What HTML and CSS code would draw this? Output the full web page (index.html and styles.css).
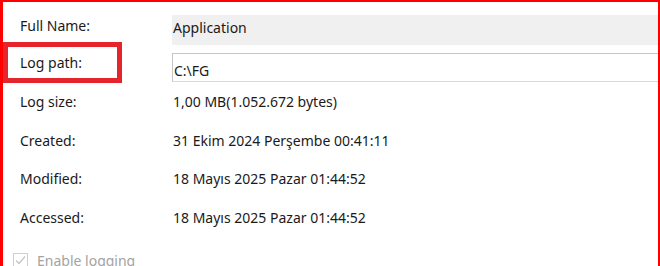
FILE: index.html
```html
<!DOCTYPE html>
<html lang="en">
<head>
    <meta charset="UTF-8">
    <meta name="viewport" content="width=device-width, initial-scale=1.0">
    <title>Log Properties</title>
    <link rel="stylesheet" href="styles.css">
</head>
<body>
    <div class="frame">
        <div class="row row-name">
            <div class="label">Full Name:</div>
            <div class="value field-readonly">Application</div>
        </div>
        <div class="row row-path">
            <div class="label label-marked">
                Log path:
                <span class="mark"></span>
            </div>
            <input type="text" class="value field-input" value="C:\FG">
        </div>
        <div class="row row-info">
            <div class="label">Log size:</div>
            <div class="value">1,00 MB(1.052.672 bytes)</div>
        </div>
        <div class="row row-info">
            <div class="label">Created:</div>
            <div class="value">31 Ekim 2024 Perşembe 00:41:11</div>
        </div>
        <div class="row row-info">
            <div class="label">Modified:</div>
            <div class="value">18 Mayıs 2025 Pazar 01:44:52</div>
        </div>
        <div class="row row-info">
            <div class="label">Accessed:</div>
            <div class="value">18 Mayıs 2025 Pazar 01:44:52</div>
        </div>
        <label class="check">
            <span class="box">
                <svg width="13" height="13" viewBox="0 0 13 13">
                    <path d="M2 6.5 L5 9.5 L11 2.5" fill="none" stroke="#c4c4c4" stroke-width="1.2"/>
                </svg>
            </span>
            Enable logging
        </label>
    </div>
</body>
</html>
```

FILE: styles.css
```css
body{
    margin: 0;
    font-family: "Noto Sans", "Open Sans", sans-serif;
    font-size: 14px;
    color: #1a1a1a;
    background: #fff;
}

.frame{
    width: 655px;
    height: 262px;
    border-style: solid;
    border-color: #ff0000;
    border-width: 2px 2px 2px 3px;
    overflow: hidden;
    padding-top: 13px;
    box-sizing: content-box;
}

.row{
    display: flex;
    align-items: center;
}

.label{
    width: 152px;
    padding-left: 17px;
    flex-shrink: 0;
}

.value{
    flex: 1;
    padding-left: 1px;
}

.row-name{
    height: 30px;
    align-items: stretch;
}

.row-name .label{
    padding-top: 1px;
    line-height: 20px;
}

.field-readonly{
    background: #f0f0f0;
    line-height: 20px;
    padding-top: 3px;
}

.row-path{
    height: 29px;
    margin-top: 8px;
}

.label-marked{
    position: relative;
    align-self: stretch;
    line-height: 20px;
    padding-top: 0;
}

.mark{
    position: absolute;
    left: 0;
    top: -11px;
    width: 119px;
    height: 41px;
    border: 5px solid #e4262c;
    box-sizing: border-box;
}

.field-input{
    height: 29px;
    box-sizing: border-box;
    border: 1px solid #c6c6c6;
    border-bottom-color: #d9d9d9;
    border-right: none;
    font: inherit;
    color: inherit;
    padding: 6px 0 0 1px;
    outline: none;
    margin: 0;
}

.row-info{
    height: 38.7px;
}

.row-info:first-of-type{
    height: 38px;
}

.check{
    display: flex;
    align-items: center;
    gap: 9px;
    margin-top: 14px;
    padding-left: 10px;
    color: #a3a3a3;
}

.box{
    width: 13px;
    height: 13px;
    border: 1px solid #cfcfcf;
    display: flex;
}
```
